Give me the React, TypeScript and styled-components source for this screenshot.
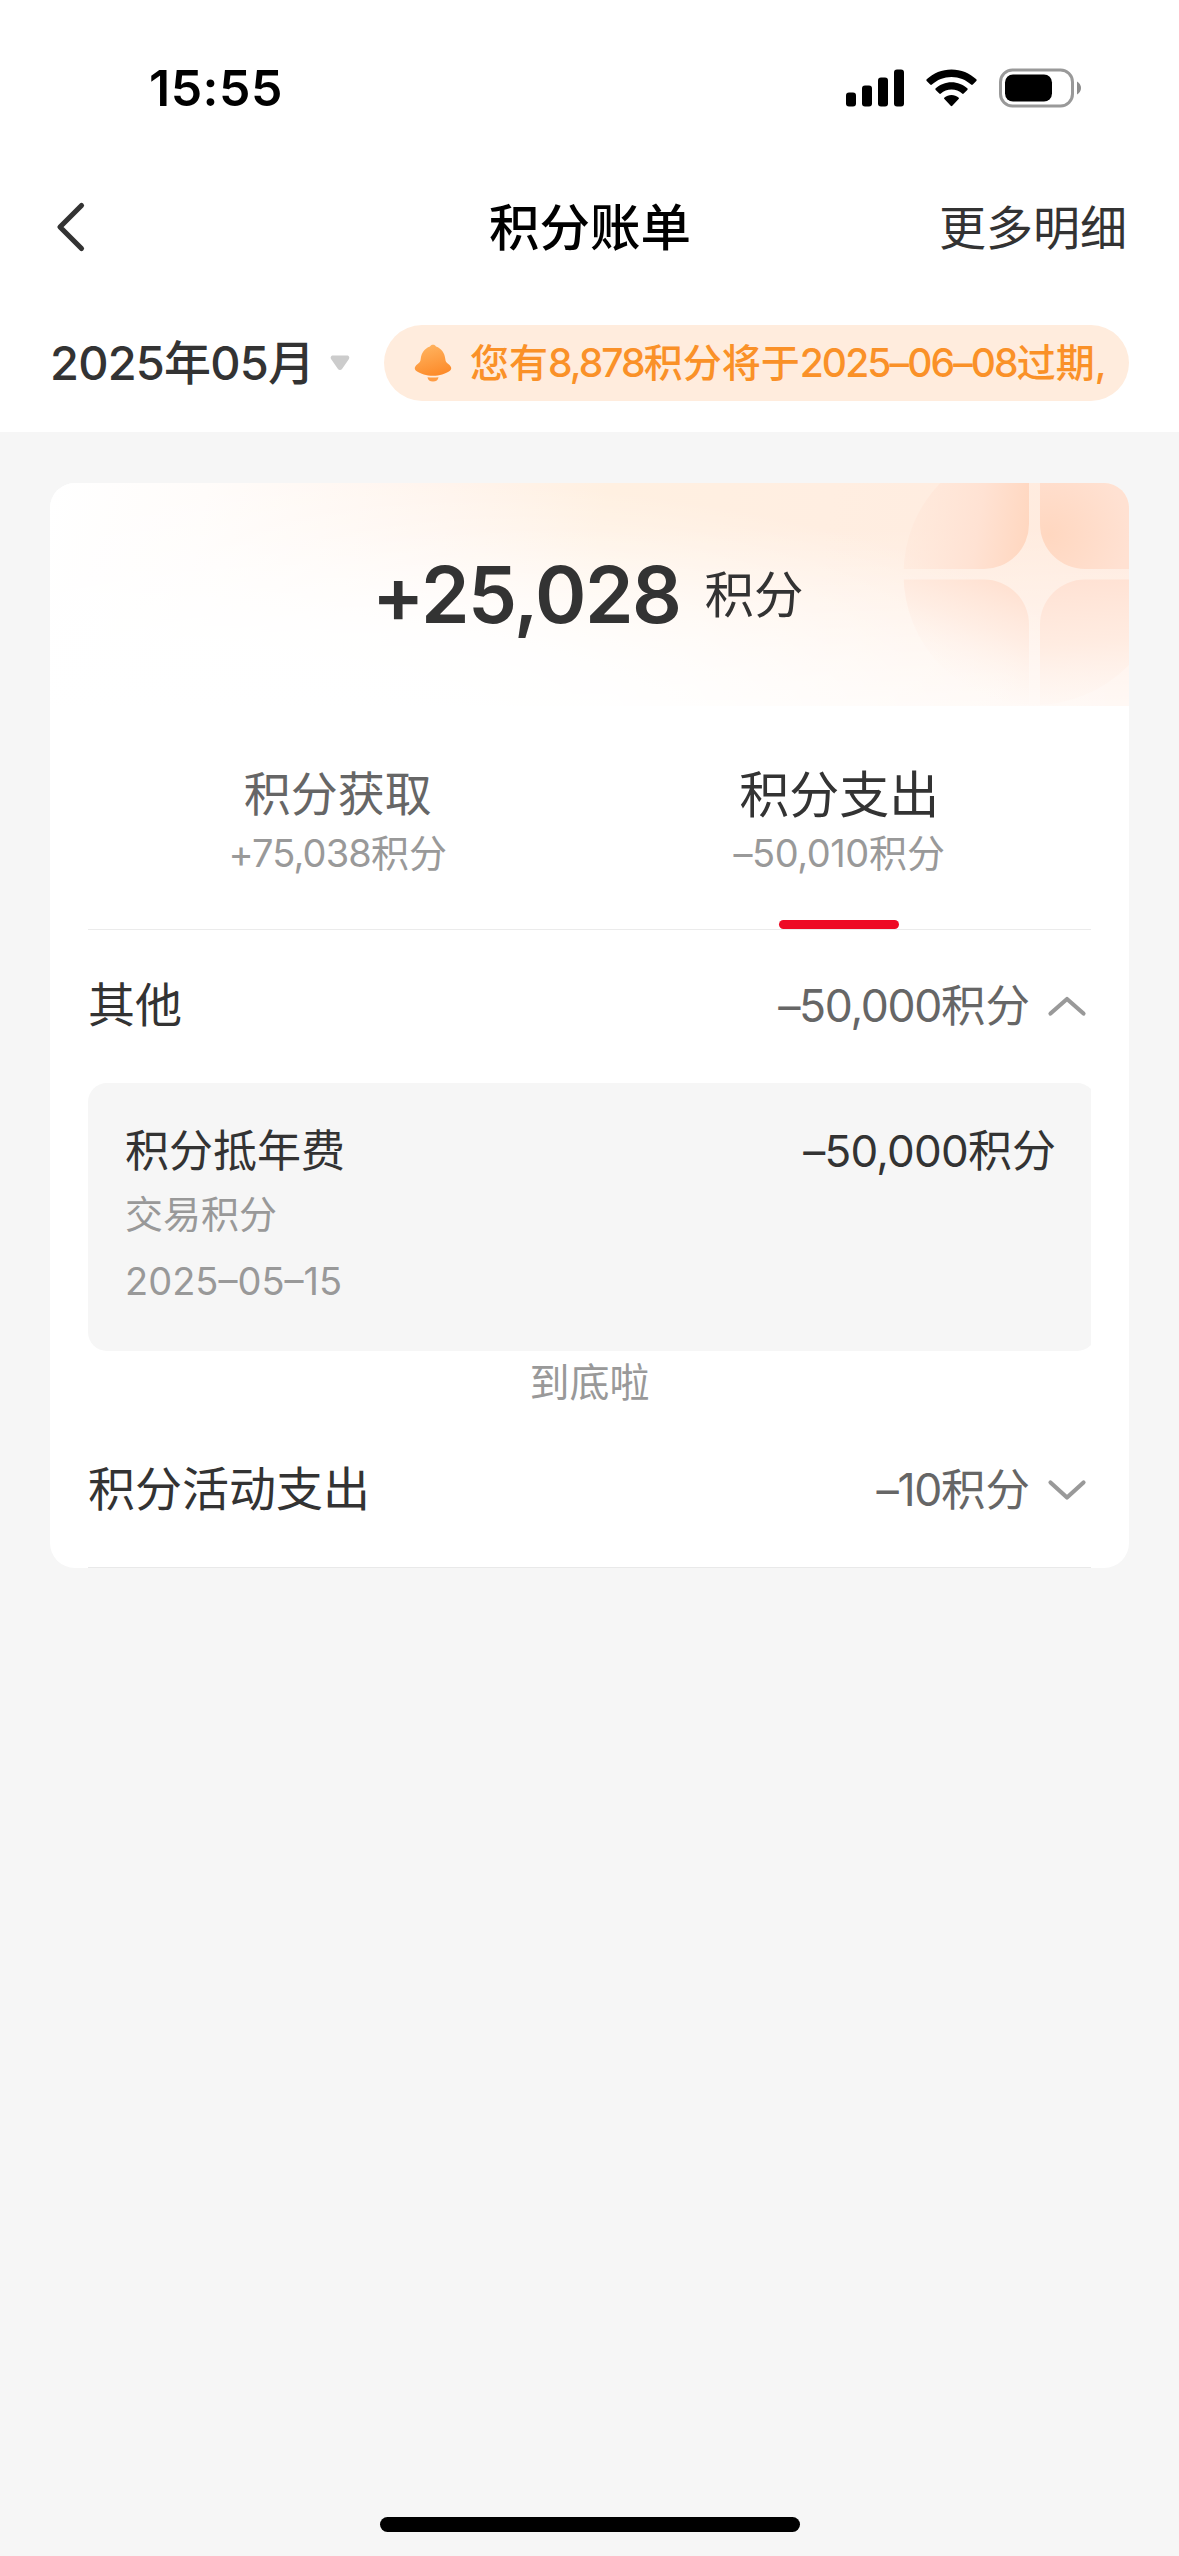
import React from "react";
import styled, { createGlobalStyle } from "styled-components";

const GlobalStyle = createGlobalStyle`
  * { box-sizing: border-box; }
  html, body { margin: 0; padding: 0; background: #f6f6f6; }
  body {
    font-family: Inter, "Noto Sans CJK SC", sans-serif;
    color: #333;
    -webkit-font-smoothing: antialiased;
  }
`;

const Screen = styled.div`
  width: 1179px;
  height: 2556px;
  display: flex;
  flex-direction: column;
  background: #f6f6f6;
  overflow: hidden;
`;

const Top = styled.header`
  height: 432px;
  flex: none;
  background: #fff;
  display: flex;
  flex-direction: column;
`;

const StatusBar = styled.div`
  height: 175px;
  padding: 0 98px 0 149px;
  display: flex;
  align-items: center;
  justify-content: space-between;
`;

const Clock = styled.div`
  font-size: 50px;
  font-weight: 600;
  line-height: 60px;
  letter-spacing: 0.5px;
  color: #000;
`;

const StatusIcons = styled.div`
  display: flex;
  align-items: center;
`;

const NavBar = styled.nav`
  height: 104px;
  padding: 0 52px 0 55px;
  display: grid;
  grid-template-columns: 1fr auto 1fr;
  align-items: center;
`;

const NavTitle = styled.h1`
  margin: 0 2px 0 0;
  font-size: 50.500px;
  line-height: 60px;
  padding-top: 2px;
  font-weight: 500;
  color: #000;
`;

const NavAction = styled.div`
  justify-self: end;
  font-size: 47px;
  line-height: 60px;
  padding-top: 2px;
`;

const FilterRow = styled.div`
  height: 153px;
  padding: 15px 50px 0;
  display: flex;
  align-items: center;
`;

const Month = styled.div`
  width: 334px;
  display: flex;
  align-items: center;
  gap: 16px;
  font-size: 47px;
  font-weight: 500;
  line-height: 60px;
  letter-spacing: -0.8px;
  white-space: nowrap;
`;

const Notice = styled.div`
  flex: 1;
  min-width: 0;
  height: 76px;
  border-radius: 38px;
  background: #ffecdd;
  padding: 0 25px 0 30px;
  display: flex;
  align-items: center;
  gap: 18px;
`;

const NoticeText = styled.div`
  flex: 1;
  min-width: 0;
  overflow: hidden;
  white-space: nowrap;
  font-size: 39px;
  line-height: 56px;
  font-weight: 500;
  color: #fa9128;
`;

const Num = styled.span<{ $tight?: number }>`
  letter-spacing: ${(p) => p.$tight ?? -0.022}em;
`;

const Card = styled.main`
  margin: 51px 50px 0;
  height: 1085px;
  flex: none;
  border-radius: 25px;
  background: #fff;
  overflow: hidden;
`;

const Banner = styled.section`
  height: 223px;
  position: relative;
  background:
    radial-gradient(ellipse 780px 240px at 28% 105%, #fff 0%, rgba(255, 255, 255, 0.9) 35%, rgba(255, 255, 255, 0) 100%),
    linear-gradient(to bottom, rgba(255, 255, 255, 0) 20%, rgba(255, 255, 255, 0.68) 100%),
    linear-gradient(100deg, #fff 0%, #fffcfa 14%, #fff4ec 36%, #fff0e1 50%, #ffeee1 70%, #ffeade 100%);
`;

const BannerArt = styled.svg`
  position: absolute;
  right: 0;
  top: 0;
`;

const Total = styled.div`
  position: relative;
  height: 223px;
  padding-left: 322px;
  display: flex;
  align-items: center;
  gap: 24px;
`;

const TotalNumber = styled.div`
  font-size: 78px;
  font-weight: 600;
  line-height: 90px;
  letter-spacing: -1.5px;
`;

const TotalUnit = styled.div`
  font-size: 49.5px;
  line-height: 60px;
`;

const Body = styled.div`
  padding: 0 38px;
`;

const Tabs = styled.div`
  display: grid;
  grid-template-columns: 1fr 1fr;
  height: 224px;
  border-bottom: 1px solid #ebebeb;
`;

const Tab = styled.div`
  display: flex;
  flex-direction: column;
  align-items: center;
  padding: 59px 2px 0 0;
`;

const TabName = styled.div<{ $active?: boolean }>`
  font-size: ${(p) => (p.$active ? 50 : 47)}px;
  line-height: ${(p) => (p.$active ? 60 : 58)}px;
  height: 58px;
  color: ${(p) => (p.$active ? "#333" : "#666")};
`;

const TabSum = styled.div`
  font-size: 38px;
  line-height: 60px;
  color: #999;
`;

const TabMark = styled.div`
  margin-top: 37px;
  width: 120px;
  height: 9px;
  border-radius: 5px;
  background: #ee0a24;
`;

const Row = styled.div<{ $last?: boolean }>`
  height: ${(p) => (p.$last ? 154 : 153)}px;
  display: flex;
  align-items: center;
  justify-content: space-between;
  padding-right: 4px;
  border-bottom: ${(p) => (p.$last ? "1px solid #e9e9e9" : "none")};
`;

const RowName = styled.div`
  font-size: 47px;
  line-height: 60px;
  padding-bottom: 4px;
`;

const RowValue = styled.div`
  display: flex;
  align-items: center;
  gap: 17px;
  font-size: 44.5px;
  line-height: 60px;
  padding-bottom: 2px;
  color: #666;
`;

const DetailClip = styled.div`
  overflow: hidden;
`;

const Detail = styled.div`
  height: 268px;
  margin-right: -5px;
  border-radius: 19px;
  background: #f6f6f6;
  padding: 38px 40px 0 37px;
`;

const DetailHead = styled.div`
  display: flex;
  justify-content: space-between;
  font-size: 44px;
  line-height: 60px;
`;

const DetailMeta = styled.div`
  font-size: 38px;
  line-height: 67px;
  color: #999;
`;

const EndNote = styled.div`
  height: 63px;
  text-align: center;
  font-size: 40px;
  line-height: 63px;
  color: #999;
`;

const Home = styled.div`
  flex: none;
  margin: auto auto 24px;
  width: 420px;
  height: 15px;
  border-radius: 8px;
  background: #000;
`;

function Signal() {
  return (
    <svg width="58" height="38" viewBox="0 0 58 38">
      <rect x="0" y="23.500" width="10" height="14" rx="3" />
      <rect x="16" y="16.500" width="10" height="21" rx="3" />
      <rect x="32" y="8.500" width="10" height="29" rx="3" />
      <rect x="48" y="0.500" width="10" height="37" rx="3" />
    </svg>
  );
}

const WifiIcon = styled.svg`
  margin: 0 22px;
`;

function Wifi() {
  return (
    <WifiIcon width="51" height="38" viewBox="0 0 51 38">
      <path d="M25.5 .5C35 .5 43.800 4.200 50.300 10.300c.5.500.5 1.200 0 1.700l-3.500 3.500c-.5.500-1.200.5-1.700 0C39.900 10.700 33 7.900 25.500 7.900S11.100 10.700 5.900 15.500c-.5.500-1.200.5-1.700 0L.7 12c-.5-.5-.5-1.200 0-1.700C7.200 4.200 16 .5 25.500 .5z" />
      <path d="M25.500 13.200c6.100 0 11.600 2.300 15.800 6.100.5.500.5 1.200 0 1.700l-3.600 3.600c-.4.400-1.100.5-1.600 0-2.800-2.500-6.500-4-10.600-4s-7.800 1.500-10.600 4c-.5.500-1.200.4-1.600 0L9.700 21c-.5-.5-.5-1.200 0-1.700 4.200-3.800 9.700-6.100 15.800-6.100z" />
      <path d="M25.500 26c2.700 0 5.100.9 7 2.400.6.500.6 1.200.1 1.700l-6.300 6.700c-.4.500-1.200.5-1.600 0l-6.300-6.700c-.5-.5-.5-1.200.1-1.700 1.900-1.500 4.300-2.400 7-2.400z" />
    </WifiIcon>
  );
}

function Battery() {
  return (
    <svg width="82" height="40" viewBox="0 0 82 40">
      <rect x="1.500" y="2" width="72" height="36" rx="12" fill="none" stroke="#999" strokeWidth="3" />
      <rect x="6" y="6.500" width="47" height="27" rx="8" />
      <path d="M78 13.500c2.500 1.300 4 3.800 4 6.500s-1.500 5.200-4 6.500z" fill="#8c8c8c" />
    </svg>
  );
}

function BackIcon() {
  return (
    <svg width="32" height="52" viewBox="0 0 32 52">
      <path d="M26.500 4.500L5 26l21.500 21.500" fill="none" stroke="#333" strokeWidth="5.200" strokeLinecap="round" strokeLinejoin="round" />
    </svg>
  );
}

function Caret() {
  return (
    <svg width="20" height="16" viewBox="0 0 20 16">
      <path d="M3 .5h14c2 0 3 2 1.800 3.700l-6.600 9.600c-1.100 1.600-3.300 1.600-4.400 0L1.200 4.200C0 2.500 1 .5 3 .5z" fill="#ccc" />
    </svg>
  );
}

function Bell() {
  return (
    <svg width="38" height="38" viewBox="0 0 38 38">
      <defs>
        <linearGradient id="bell" x1="0.200" y1="0" x2="0.550" y2="1">
          <stop offset="0" stopColor="#ffb562" />
          <stop offset="1" stopColor="#fd8b2a" />
        </linearGradient>
      </defs>
      <path d="M19 .8c1.600 0 2.300.7 3 1.600C27.500 4.200 30.700 9 31.300 15c.2 2.500 1.200 3.600 3 5 3.600 2.700 4 5.400.6 7.400-3.400 2.200-9.200 4.300-15.900 4.300S6.500 29.600 3.100 27.400C-.3 25.400.1 22.700 3.700 20c1.800-1.400 2.800-2.500 3-5C7.300 9 10.500 4.200 16 2.400c.7-.9 1.400-1.600 3-1.600z" fill="url(#bell)" />
      <path d="M13.500 33.200c3.700.5 7.300.5 11 0-.2 2.800-2.400 4.300-5.500 4.300s-5.300-1.500-5.500-4.300z" fill="#ff9d45" />
    </svg>
  );
}

function Chevron({ up }: { up?: boolean }) {
  return (
    <svg width="40" height="22" viewBox="0 0 40 22">
      <path d={up ? "M3.500 18.500L20 4l16.500 14.500" : "M3.500 3.500L20 18.500l16.500-15"} fill="none" stroke="#999" strokeWidth="4.200" strokeLinecap="round" strokeLinejoin="round" />
    </svg>
  );
}

function Petals() {
  return (
    <BannerArt width="226" height="223" viewBox="0 0 226 223">
      <defs>
        <clipPath id="disc">
          <circle cx="131.500" cy="91" r="131" />
        </clipPath>
        <linearGradient id="tl" x1="0" y1="0.400" x2="1" y2="0.500">
          <stop offset="0" stopColor="#ffe6d8" stopOpacity="0.4" />
          <stop offset="0.600" stopColor="#ffe2d3" />
          <stop offset="1" stopColor="#ffd7c0" />
        </linearGradient>
        <radialGradient id="tr" cx="0.100" cy="0.600" r="0.900">
          <stop offset="0" stopColor="#ffd7c0" />
          <stop offset="1" stopColor="#ffe1d2" />
        </radialGradient>
        <linearGradient id="bl" x1="0.800" y1="0" x2="0.450" y2="0.850">
          <stop offset="0" stopColor="#ffe0d0" />
          <stop offset="0.450" stopColor="#ffeadf" stopOpacity="0.7" />
          <stop offset="1" stopColor="#fff6f1" stopOpacity="0" />
        </linearGradient>
        <linearGradient id="br" x1="0.500" y1="0" x2="0.550" y2="1">
          <stop offset="0" stopColor="#ffe2d4" />
          <stop offset="0.500" stopColor="#ffebe0" stopOpacity="0.9" />
          <stop offset="1" stopColor="#fff5f0" stopOpacity="0.300" />
        </linearGradient>
      </defs>
      <g clipPath="url(#disc)">
        <path d="M0 0H126V41A45 45 0 0 1 81 86H0z" fill="url(#tl)" />
        <path d="M137 0H226V86H182A45 45 0 0 1 137 41z" fill="url(#tr)" />
        <path d="M0 96.500H81A45 45 0 0 1 126 141.500V223H0z" fill="url(#bl)" />
        <path d="M226 96.500H182A45 45 0 0 0 137 141.500V223H226z" fill="url(#br)" />
      </g>
    </BannerArt>
  );
}

export default function App() {
  return (
    <>
      <GlobalStyle />
      <Screen>
        <Top>
          <StatusBar>
            <Clock>15:55</Clock>
            <StatusIcons>
              <Signal />
              <Wifi />
              <Battery />
            </StatusIcons>
          </StatusBar>
          <NavBar>
            <BackIcon />
            <NavTitle>积分账单</NavTitle>
            <NavAction>更多明细</NavAction>
          </NavBar>
          <FilterRow>
            <Month>
              <span>2025年05月</span>
              <Caret />
            </Month>
            <Notice>
              <Bell />
              <NoticeText>
                您有<Num $tight={-0.05}>8,878</Num>积分将于<Num $tight={-0.048}>2025–06–08</Num>过期,
              </NoticeText>
            </Notice>
          </FilterRow>
        </Top>
        <Card>
          <Banner>
            <Petals />
            <Total>
              <TotalNumber>+25,028</TotalNumber>
              <TotalUnit>积分</TotalUnit>
            </Total>
          </Banner>
          <Body>
            <Tabs>
              <Tab>
                <TabName>积分获取</TabName>
                <TabSum><Num>+75,038</Num>积分</TabSum>
              </Tab>
              <Tab>
                <TabName $active>积分支出</TabName>
                <TabSum><Num $tight={-0.012}>–50,010</Num>积分</TabSum>
                <TabMark />
              </Tab>
            </Tabs>
            <Row>
              <RowName>其他</RowName>
              <RowValue>
                <span><Num $tight={-0.03}>–50,000</Num>积分</span>
                <Chevron up />
              </RowValue>
            </Row>
            <DetailClip>
              <Detail>
                <DetailHead>
                  <span>积分抵年费</span>
                  <span><Num $tight={-0.018}>–50,000</Num>积分</span>
                </DetailHead>
                <DetailMeta>交易积分</DetailMeta>
                <DetailMeta>2025–05–15</DetailMeta>
              </Detail>
            </DetailClip>
            <EndNote>到底啦</EndNote>
            <Row $last>
              <RowName>积分活动支出</RowName>
              <RowValue>
                <span><Num $tight={-0.03}>–10</Num>积分</span>
                <Chevron />
              </RowValue>
            </Row>
          </Body>
        </Card>
        <Home />
      </Screen>
    </>
  );
}
